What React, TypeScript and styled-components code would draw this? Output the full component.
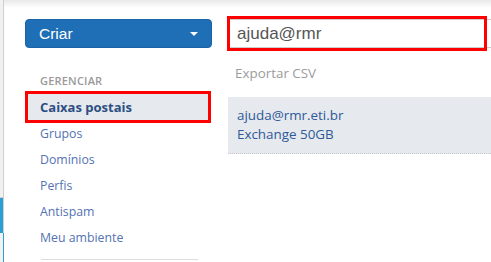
import styled, { createGlobalStyle } from 'styled-components'

const Global = createGlobalStyle`
  html, body {
    margin: 0;
    padding: 0;
    background: #ffffff;
  }
`

const Root = styled.div`
  width: 491px;
  height: 262px;
  overflow: hidden;
  display: flex;
  background: linear-gradient(#e9e9e9 0px, #ffffff 8px);
  font-family: 'Open Sans', 'Noto Sans', sans-serif;
`

const Rail = styled.div`
  width: 4px;
  flex: none;
  display: flex;
  flex-direction: column;
`

const RailPart = styled.div<{ $kind: 'top' | 'active' | 'bottom' }>`
  height: ${(p) => (p.$kind === 'top' ? '198px' : p.$kind === 'active' ? '35px' : 'auto')};
  flex: ${(p) => (p.$kind === 'bottom' ? '1' : 'none')};
  background: ${(p) => (p.$kind === 'active' ? '#2a9fd6' : '#f1f1f1')};
  border-right: 1px solid ${(p) => (p.$kind === 'bottom' ? '#2a9fd6' : '#cfcfcf')};
  border-bottom: ${(p) => (p.$kind === 'top' ? '1px solid #cfcfcf' : 'none')};
  box-sizing: border-box;
`

const Content = styled.div`
  flex: 1;
  display: flex;
  gap: 16px;
  padding: 19px 0 0 21px;
  min-width: 0;
`

const Sidebar = styled.div`
  width: 187px;
  flex: none;
  display: flex;
  flex-direction: column;
`

const CreateButton = styled.button`
  height: 29px;
  display: flex;
  align-items: center;
  justify-content: space-between;
  padding: 0 13px 0 13px;
  background: #1f6fb6;
  border: 1px solid #1a63a6;
  border-radius: 4px;
  color: #ffffff;
  font-family: 'Liberation Sans', Arial, sans-serif;
  font-size: 15.5px;
`

const Caret = styled.span`
  width: 0;
  height: 0;
  border-left: 4px solid transparent;
  border-right: 4px solid transparent;
  border-top: 4px solid #ffffff;
`

const SectionLabel = styled.div`
  margin-top: 25px;
  padding-left: 15px;
  font-size: 11px;
  line-height: 16px;
  font-weight: 600;
  color: #9a9a9a;
  letter-spacing: 0.2px;
`

const Nav = styled.nav`
  margin-top: 5px;
  display: flex;
  flex-direction: column;
`

const NavItem = styled.a<{ $active?: boolean }>`
  position: relative;
  height: 26px;
  display: flex;
  align-items: center;
  margin: 0 4px 0 3px;
  padding-left: 12px;
  font-size: ${(p) => (p.$active ? '13px' : '12.3px')};
  font-weight: ${(p) => (p.$active ? 700 : 400)};
  color: ${(p) => (p.$active ? '#2c4f82' : '#5472b3')};
  background: ${(p) => (p.$active ? '#e6e9ee' : 'transparent')};
  text-decoration: none;
`

const Highlight = styled.span`
  position: absolute;
  top: -3px;
  left: -3px;
  right: -3px;
  bottom: -3px;
  border: 3px solid #ff0000;
  pointer-events: none;
`

const Divider = styled.hr`
  margin: 9px 14px 0 16px;
  border: none;
  border-top: 1px solid #dddddd;
`

const Main = styled.div`
  flex: 1;
  display: flex;
  flex-direction: column;
  margin-right: -20px;
`

const SearchWrap = styled.div`
  position: relative;
  height: 29px;
`

const SearchBox = styled.div`
  height: 29px;
  box-sizing: border-box;
  border: 1px solid #cccccc;
  display: flex;
  align-items: center;
  padding-left: 8px;
  font-family: 'Liberation Sans', Arial, sans-serif;
  font-size: 17px;
  color: #555555;
`

const SearchMark = styled.span`
  position: absolute;
  top: -3px;
  left: -1px;
  width: 260px;
  height: 35px;
  box-sizing: border-box;
  border: 3px solid #ff0000;
  pointer-events: none;
`

const ExportLink = styled.div`
  margin-top: 16px;
  padding-left: 7px;
  font-size: 13.4px;
  line-height: 18px;
  color: #9b9b9b;
`

const Result = styled.div`
  margin-top: 15px;
  padding: 9px 0 9px 9px;
  background: #e6e9ee;
  border-bottom: 1px dotted #c8c8c8;
  display: flex;
  flex-direction: column;
`

const ResultLine = styled.span`
  font-size: 13.4px;
  line-height: 19px;
  color: #2d5a98;
`

const items = ['Grupos', 'Domínios', 'Perfis', 'Antispam', 'Meu ambiente']

export default function App() {
  return (
    <Root>
      <Global />
      <Rail>
        <RailPart $kind="top" />
        <RailPart $kind="active" />
        <RailPart $kind="bottom" />
      </Rail>
      <Content>
        <Sidebar>
          <CreateButton>
            Criar
            <Caret />
          </CreateButton>
          <SectionLabel>GERENCIAR</SectionLabel>
          <Nav>
            <NavItem $active>
              Caixas postais
              <Highlight />
            </NavItem>
            {items.map((it) => (
              <NavItem key={it}>{it}</NavItem>
            ))}
          </Nav>
          <Divider />
        </Sidebar>
        <Main>
          <SearchWrap>
            <SearchBox>ajuda@rmr</SearchBox>
            <SearchMark />
          </SearchWrap>
          <ExportLink>Exportar CSV</ExportLink>
          <Result>
            <ResultLine>ajuda@rmr.eti.br</ResultLine>
            <ResultLine>Exchange 50GB</ResultLine>
          </Result>
        </Main>
      </Content>
    </Root>
  )
}
